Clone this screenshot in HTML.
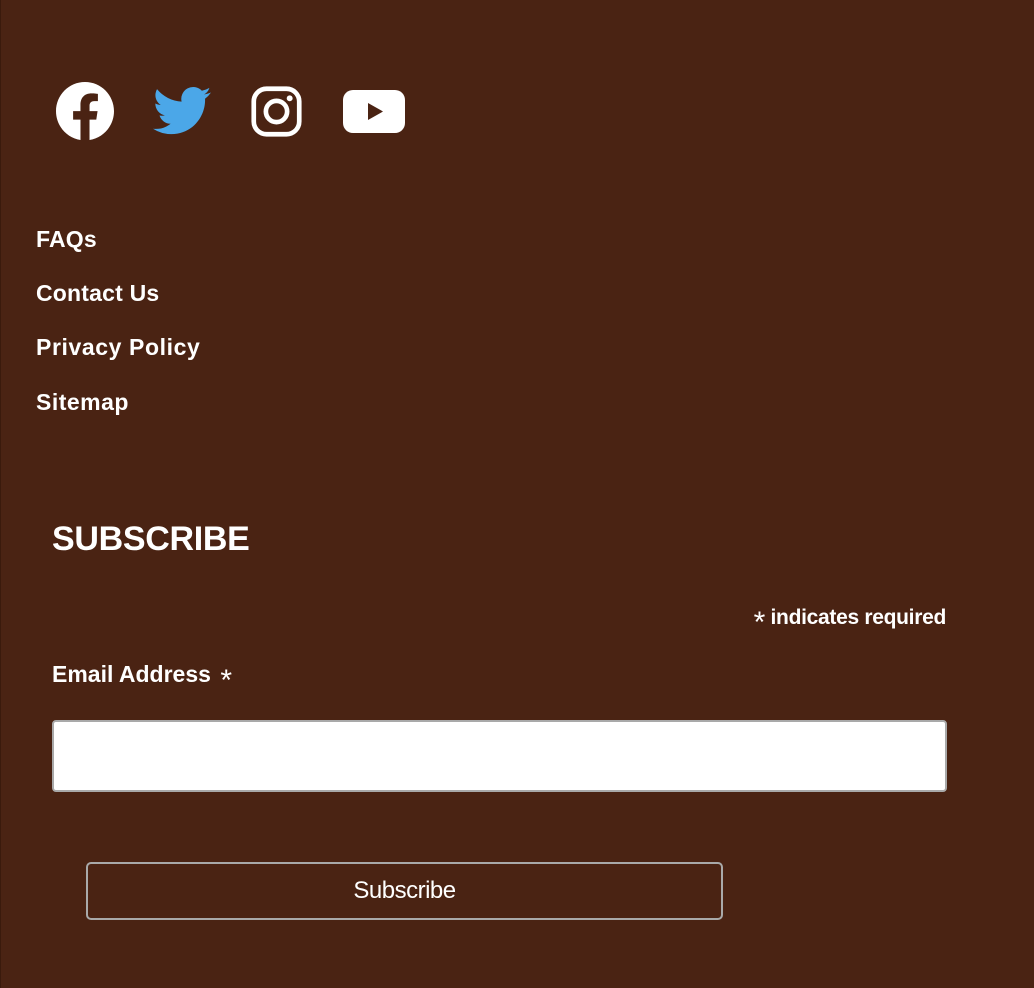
<!DOCTYPE html>
<html><head><meta charset="utf-8"><style>
*{margin:0;padding:0;box-sizing:border-box}
body{width:1034px;height:988px;background:#4a2313;font-family:"Liberation Sans",sans-serif;color:#fff;position:relative;overflow:hidden}
.a{position:absolute}
.link{position:absolute;left:36px;font-weight:bold;font-size:23px;letter-spacing:0.2px}
.st{font-size:30px;vertical-align:-8px;font-weight:normal}
</style></head><body>
<div class="a" style="left:0;top:0;width:1px;height:988px;background:#3a1a0c"></div>
<svg class="a" style="left:56px;top:82px" width="58" height="58" viewBox="0 0 24 24"><path fill="#fff" d="M24 12.07C24 5.41 18.63 0 12 0S0 5.4 0 12.07C0 18.1 4.39 23.1 10.13 24v-8.44H7.08v-3.49h3.04V9.41c0-3.02 1.8-4.7 4.54-4.7 1.31 0 2.68.24 2.68.24v2.97h-1.5c-1.5 0-1.960.93-1.96 1.89v2.26h3.32l-.53 3.5h-2.8V24C19.62 23.1 24 18.1 24 12.07"/></svg>
<svg class="a" style="left:153px;top:86px" width="58" height="50" viewBox="0 0 24 20"><path fill="#4ba7e8" d="M24 2.37a9.9 9.9 0 0 1-2.83.78A4.93 4.93 0 0 0 23.34.42a9.86 9.86 0 0 1-3.13 1.2A4.92 4.92 0 0 0 11.830 6.1 13.98 13.98 0 0 1 1.67.96a4.92 4.92 0 0 0 1.52 6.57 4.9 4.9 0 0 1-2.23-.62v.06a4.93 4.93 0 0 0 3.95 4.83 4.9 4.9 0 0 1-2.22.08 4.93 4.93 0 0 0 4.6 3.42A9.88 9.88 0 0 1 0 17.34a13.94 13.94 0 0 0 7.55 2.21c9.05 0 14-7.5 14-14 0-.21 0-.42-.02-.63A10 10 0 0 0 24 2.37z"/></svg>
<svg class="a" style="left:251px;top:86px" width="51" height="51" viewBox="0 0 24 24"><rect x="1.3" y="1.3" width="21.4" height="21.4" rx="6" fill="none" stroke="#fff" stroke-width="2.2"/><circle cx="12" cy="12" r="5" fill="none" stroke="#fff" stroke-width="2.2"/><circle cx="18.2" cy="5.8" r="1.4" fill="#fff"/></svg>
<svg class="a" style="left:343px;top:90px" width="62" height="43" viewBox="0 0 62 43"><rect x="0" y="0" width="62" height="43" rx="10" fill="#fff"/><path d="M25 13 L40 21.5 L25 30Z" fill="#4a2313"/></svg>
<div class="link" style="top:226px">FAQs</div>
<div class="link" style="top:280px">Contact Us</div>
<div class="link" style="top:334px;letter-spacing:0.6px">Privacy Policy</div>
<div class="link" style="top:389px;letter-spacing:0.5px">Sitemap</div>
<div class="a" style="left:52px;top:520px;font-size:34px;font-weight:bold;letter-spacing:-0.3px">SUBSCRIBE</div>
<div class="a" style="right:88px;top:606px;font-size:21px;font-weight:bold;letter-spacing:-0.3px"><span class="st">*</span> indicates required</div>
<div class="a" style="left:52px;top:661px;font-size:23px;font-weight:bold;letter-spacing:0px">Email Address <span class="st" style="margin-left:3px">*</span></div>
<div class="a" style="left:52px;top:720px;width:895px;height:72px;background:#fff;border:2px solid #a9a9a9;border-radius:4px"></div>
<div class="a" style="left:86px;top:862px;width:637px;height:58px;border:2px solid #a9a9a9;border-radius:5px;text-align:center;line-height:54px;font-size:24px;letter-spacing:-0.5px">Subscribe</div>
</body></html>
